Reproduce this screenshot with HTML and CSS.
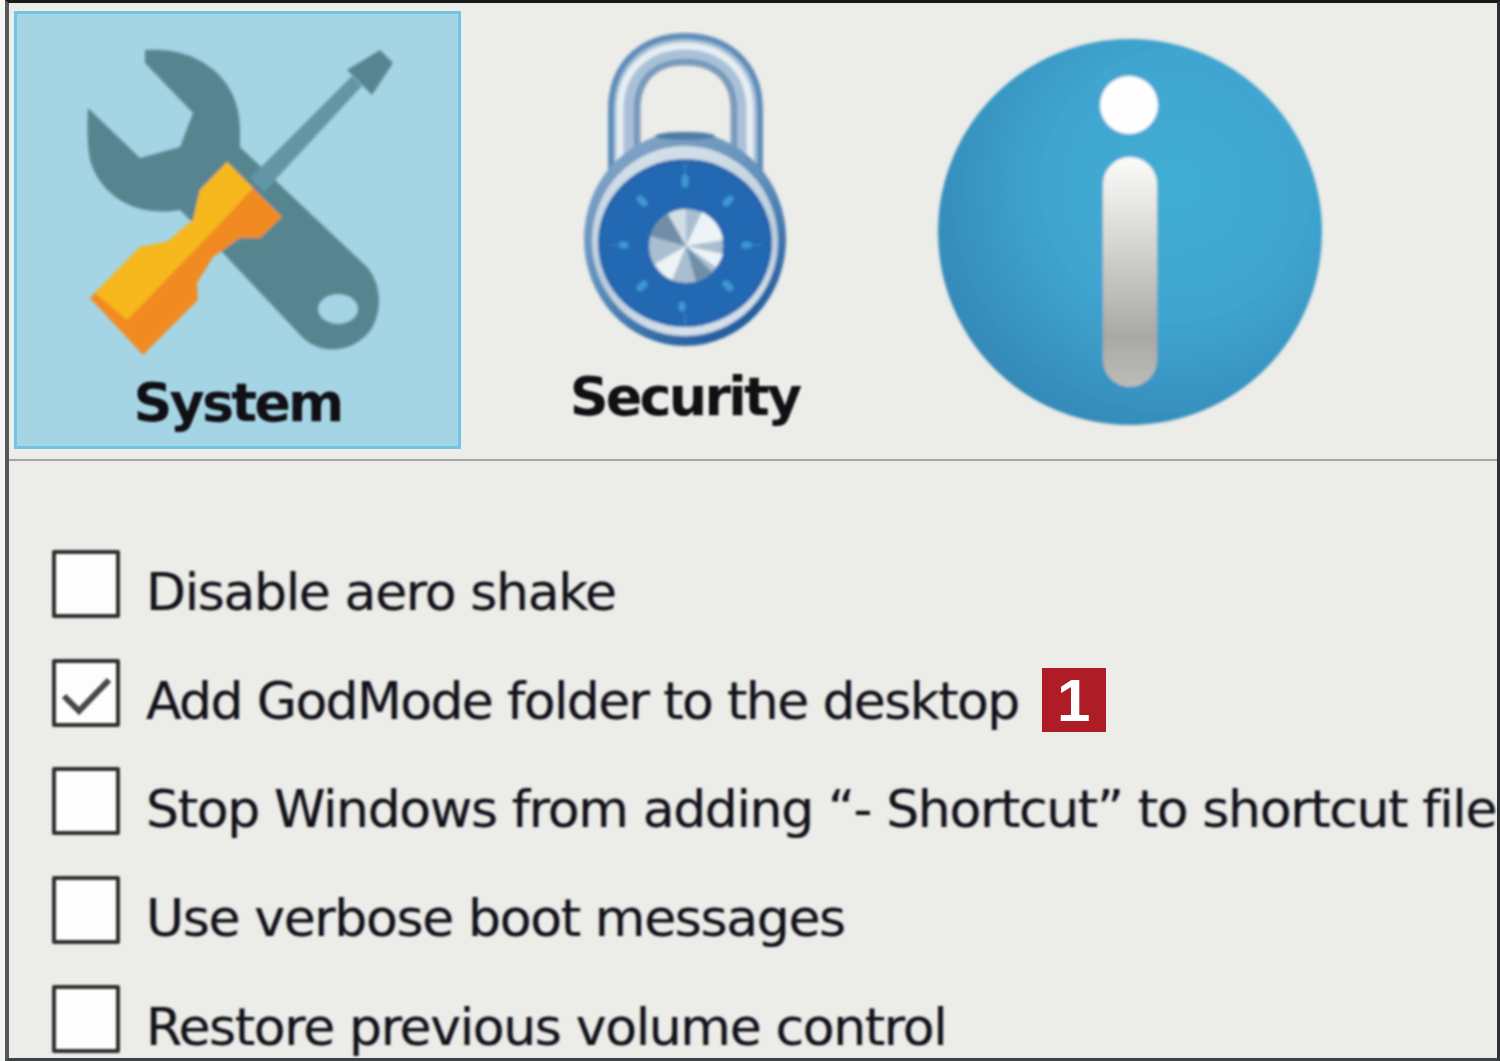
FILE: index.html
```html
<!DOCTYPE html>
<html lang="en">
<head>
<meta charset="utf-8">
<title>Tweaks</title>
<link rel="stylesheet" href="styles.css">
</head>
<body>
<main class="window">
  <header class="toolbar">
    <div class="tab tab-active">
      <svg class="tab-icon tab-icon-system" viewBox="17 14 441 358" aria-hidden="true">
        <defs>
          <filter id="soft" x="-5%" y="-5%" width="110%" height="110%"><feGaussianBlur stdDeviation="1.4"/></filter>
        </defs>
        <g filter="url(#soft)">
          <path fill="#578590" fill-rule="evenodd" d="M145 50C200 46 240 80 240 128L240 147L367 267C382 285 382 310 372 328C358 350 325 358 303 338L223 253L180 210C135 218 100 195 90 160C87 145 87 125 88 108L140 158L180 147L193 113L145 63Z M338 294a20 15 0 1 0 .1 0Z"/>
          <path fill="#6296a6" d="M250 178L352 76L362 86L264 192Z"/>
          <path fill="#578590" d="M347 70L380 50L393 63L372 95Z"/>
          <path fill="#f28a22" d="M227 162L282 217L260 238L240 238L213 257L197 283L198 300L143 355L90 298L140 247L167 242L193 220L200 190Z"/>
          <path fill="#f6b81f" d="M227 162L253 188L212 232L127 320L95 293L140 247L167 242L193 220L200 190Z"/>
        </g>
      </svg>
      <span class="tab-label">System</span>
    </div>
    <div class="tab">
      <svg class="tab-icon tab-icon-security" viewBox="464 14 441 352" aria-hidden="true">
        <defs>
          <linearGradient id="ringOuter" x1="0" x2=".6" y1="0" y2="1">
            <stop offset="0" stop-color="#8ba9c8"/><stop offset=".55" stop-color="#5f8fbb"/><stop offset="1" stop-color="#235f9f"/>
          </linearGradient>
          <linearGradient id="ringInner" x1="0" x2=".3" y1="0" y2="1">
            <stop offset="0" stop-color="#d9e3ea"/><stop offset=".7" stop-color="#b8cddd"/><stop offset="1" stop-color="#d3dfe9"/>
          </linearGradient>
        </defs>
        <g filter="url(#soft)">
          <g fill="none">
            <path stroke="#5f8db9" stroke-width="32" d="M624 172V110C624 70 650 49 685 49C720 49 747 70 747 110V172"/>
            <path stroke="#a9c1d8" stroke-width="20" d="M624 172V110C624 70 650 49 685 49C720 49 747 70 747 110V172"/>
            <path stroke="#e7eef3" stroke-width="7" d="M620 172V110C620 68 650 46 685 46C720 46 750 68 750 110V172"/>
            <path stroke="#7f9cb9" stroke-width="5" d="M638 172V110C638 80 655 63 685 63C715 63 733 80 733 110V172"/>
          </g>
          <ellipse cx="685" cy="239" rx="101" ry="107" fill="url(#ringOuter)"/>
          <ellipse cx="685" cy="241" rx="93" ry="95" fill="url(#ringInner)"/>
          <ellipse cx="685" cy="136" rx="30" ry="4" fill="#4d7ba6"/>
          <ellipse cx="685" cy="243" rx="87" ry="84" fill="#2268b2"/>
          <ellipse cx="685" cy="243" rx="85" ry="82" fill="none" stroke="#1b5a9f" stroke-width="3" stroke-dasharray="2 5"/>
          <g fill="none" stroke="#3d97d2" stroke-width="7" stroke-linecap="round">
            <path d="M685 178v6M640 199l4 4M730 199l-4 4M622 245h3M748 245h-3M640 288l4-4M730 288l-4-4M682 308v-3"/>
          </g>
          <g fill="none" stroke="#3a86c6" stroke-width="1.5">
            <path d="M685 162v12M610 245h10M762 245h-10M685 326v-12"/>
          </g>
          <circle cx="686" cy="246" r="37" fill="#a9bfd1"/>
          <path fill="#eef3f7" d="M686 246L723 240A37 37 0 0 0 702 212ZM686 246L655 264A37 37 0 0 0 672 280ZM686 246L723 254A37 37 0 0 1 716 267Z"/>
          <path fill="#6f8ea8" d="M686 246L650 236A37 37 0 0 1 668 214ZM686 246L712 272A37 37 0 0 1 696 282Z"/>
          <path fill="#d2dde6" d="M686 246L668 214A37 37 0 0 1 686 209Z"/>
        </g>
      </svg>
      <span class="tab-label">Security</span>
    </div>
    <div class="tab">
      <svg class="tab-icon tab-icon-info" viewBox="911 14 441 432" aria-hidden="true">
        <defs>
          <radialGradient id="ball" cx=".62" cy=".38" r=".68">
            <stop offset="0" stop-color="#41add3"/><stop offset=".5" stop-color="#3fa5d0"/><stop offset="1" stop-color="#3388b6"/>
          </radialGradient>
          <linearGradient id="bar" x1="0" x2="0" y1="0" y2="1">
            <stop offset="0" stop-color="#fbfbf9"/><stop offset=".35" stop-color="#d9d8d4"/><stop offset=".78" stop-color="#a9a8a4"/><stop offset="1" stop-color="#bdbcb8"/>
          </linearGradient>
        </defs>
        <g filter="url(#soft)">
          <ellipse cx="1130" cy="232" rx="192" ry="193" fill="url(#ball)"/>
          <circle cx="1129" cy="105" r="29" fill="#fefefe"/>
          <rect x="1103" y="157" width="54" height="230" rx="27" fill="url(#bar)"/>
        </g>
      </svg>
    </div>
  </header>
  <div class="divider"></div>
  <ul class="options">
    <li class="option"><span class="check"></span><span class="option-text">Disable aero shake</span></li>
    <li class="option">
      <span class="check">
        <svg class="check-mark" viewBox="0 0 60 60" aria-hidden="true"><path d="M8 33L23 48L53 17"/></svg>
      </span>
      <span class="option-text option-text-tight">Add GodMode folder to the desktop</span>
      <span class="badge">1</span>
    </li>
    <li class="option"><span class="check"></span><span class="option-text">Stop Windows from adding “- Shortcut” to shortcut files</span></li>
    <li class="option"><span class="check"></span><span class="option-text">Use verbose boot messages</span></li>
    <li class="option"><span class="check"></span><span class="option-text">Restore previous volume control</span></li>
  </ul>
</main>
</body>
</html>
```
FILE: styles.css
```css
* { box-sizing: border-box; }
html, body { margin: 0; height: 100%; background: #f6f6f4; overflow: hidden; }
body { font-family: "DejaVu Sans", sans-serif; color: #14141c; }

.window {
  margin-left: 5px;
  height: 1061px;
  background: #ecece8;
  border-top: 3px solid #18191b;
  border-left: 4px solid #55595c;
  border-right: 3px solid #2e3033;
  border-bottom: 3px solid #3f4245;
  overflow: hidden;
}

.toolbar { display: flex; padding: 8px 0 10px 5px; }

.tab {
  flex: 0 0 447px;
  height: 438px;
  border: 3px solid transparent;
  display: flex;
  flex-direction: column;
  align-items: center;
}
.tab-active { background: #a5d5e5; border-color: #72c4e4; }

.tab-icon { display: block; width: 441px; flex: none; }
.tab-icon-system { height: 358px; }
.tab-icon-security { height: 352px; }
.tab-icon-info { height: 432px; }

.tab-label {
  font-size: 54px;
  line-height: 62px;
  font-weight: 700;
  color: #101014;
  letter-spacing: -2.8px;
  filter: blur(.9px);
}

.divider { height: 2px; background: #a3a5a3; }

.options {
  list-style: none;
  margin: 0;
  padding: 89px 0 0 43px;
  display: flex;
  flex-direction: column;
  gap: 40.7px;
}
.option { display: flex; align-items: center; height: 68px; white-space: nowrap; }

.check {
  flex: none;
  width: 68px;
  height: 68px;
  background: #fdfdfd;
  border: 4px solid #2f2f2f;
  border-radius: 2px;
  margin-right: 26px;
  filter: blur(.9px);
}
.check-mark { display: block; width: 60px; height: 60px; }
.check-mark path { fill: none; stroke: #474747; stroke-width: 6; }

.option-text {
  font-size: 52px;
  line-height: 68px;
  letter-spacing: -1.35px;
  color: #12121c;
  padding-top: 16px;
  filter: blur(.9px);
  text-shadow: -1px 0 0 rgba(220,150,60,.4), 1px 0 0 rgba(60,140,210,.4);
}
.option-text-tight { letter-spacing: -1.62px; }

.badge {
  flex: none;
  width: 64px;
  height: 64px;
  margin: 14px 0 0 23px;
  background: #ae1c26;
  color: #fff;
  font-family: "Liberation Sans", sans-serif;
  font-size: 60px;
  line-height: 66px;
  font-weight: 700;
  text-align: center;
  filter: blur(.7px);
}
```
